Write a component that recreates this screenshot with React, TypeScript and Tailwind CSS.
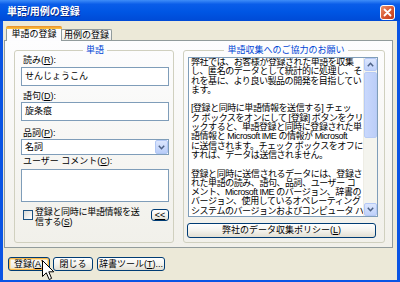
import React from 'react';

const xpButton =
  'flex items-center justify-center rounded-[3px] border border-[#003C74] bg-gradient-to-b from-white via-[#F4F3EE] to-[#E2DFD3] text-[9px] leading-none text-black';

const U = ({ children }: { children: React.ReactNode }) => (
  <span className="underline underline-offset-1">{children}</span>
);

const Chevron = ({ down = false }: { down?: boolean }) => (
  <svg width="7" height="5" viewBox="0 0 7 5" className={down ? 'rotate-180' : ''}>
    <path d="M0.8 4.2 L3.5 1.3 L6.2 4.2" fill="none" stroke="#4D6185" strokeWidth="1.5" />
  </svg>
);

const infoLines = [
  '弊社では、お客様が登録された単語を収集',
  'し、匿名のデータとして統計的に処理し、そ',
  'れを基に、より良い製品の開発を目指してい',
  'ます。',
  '',
  '[登録と同時に単語情報を送信する] チェッ',
  'ク ボックスをオンにして [登録] ボタンをクリ',
  'ックすると、単語登録と同時に登録された単',
  '語情報と Microsoft IME の情報が Microsoft',
  'に送信されます。チェック ボックスをオフに',
  'すれば、データは送信されません。',
  '',
  '登録と同時に送信されるデータには、登録さ',
  'れた単語の読み、語句、品詞、ユーザー コ',
  'メント、Microsoft IME のバージョン、辞書の',
  'バージョン、使用しているオペレーティング',
  'システムのバージョンおよびコンピュータ ハ',
];

const Label = ({ children, className = '' }: { children: React.ReactNode; className?: string }) => (
  <div className={`h-[10px] pl-[2px] text-[9px] leading-[10px] ${className}`}>{children}</div>
);

export default function App() {
  return (
    <div className="relative w-[400px] h-[282px] flex flex-col bg-[#0A54E4] font-['Liberation_Sans','Noto_Sans_CJK_JP',sans-serif] text-black overflow-hidden select-none">
      {/* title bar */}
      <div className="h-[21px] flex justify-between pl-[7px] pr-[5px] bg-[linear-gradient(to_bottom,#3F8DF8_0%,#0A5DE9_20%,#0056E4_55%,#004AD6_100%)]">
        <span className="self-center mt-[3px] text-white font-bold text-[10px] leading-none [text-shadow:1px_1px_0_#0B2A8A]">
          単語/用例の登録
        </span>
        <div className="self-end mb-[1px] w-[15px] h-[15px] rounded-[3px] border border-white bg-gradient-to-br from-[#E9906C] via-[#D95A33] to-[#C1391B] flex items-center justify-center">
          <svg width="9" height="9" viewBox="0 0 9 9">
            <path d="M1.5 1.5 L7.5 7.5 M7.5 1.5 L1.5 7.5" stroke="white" strokeWidth="1.8" strokeLinecap="round" />
          </svg>
        </div>
      </div>

      {/* dialog body */}
      <div className="flex-1 mx-[3px] mb-[2px] bg-[#ECE9D8] flex flex-col">
        {/* tabs */}
        <div className="flex items-end h-[14px] mt-[5px] pl-[3px]">
          <div className="relative z-10 -mb-px h-[15px] w-[56px] flex flex-col rounded-t-[2px] overflow-hidden">
            <div className="h-[3px] bg-gradient-to-b from-[#E68B2C] to-[#FFC83C]" />
            <div className="flex-1 bg-[#FCFCFE] border-x border-[#919B9C] flex items-center justify-center text-[9px] leading-none pb-[1px]">
              単語の登録
            </div>
          </div>
          <div className="h-[11px] w-[51px] -ml-px rounded-t-[2px] border border-b-0 border-[#919B9C] bg-gradient-to-b from-white to-[#ECEBE6] flex items-center justify-center text-[9px] leading-none">
            用例の登録
          </div>
        </div>

        {/* tab page */}
        <div className="ml-[1px] w-[389px] h-[208px] border border-[#919B9C] bg-gradient-to-b from-[#FDFDFE] to-[#F1F0EA] flex gap-[9px] pl-[9px] pt-[4px]">
          {/* 単語 group */}
          <fieldset className="w-[160px] h-[198px] min-w-0 border border-[#D0D0BF] rounded-[3px] pl-[6px] pr-[4px] flex flex-col">
            <legend className="mx-auto px-[3px] text-[#0046D5] text-[9px] leading-[10px]">単語</legend>
            <Label>
              読み(<U>R</U>):
            </Label>
            <div className="mt-[2px] h-[19px] border border-[#7F9DB9] bg-white pl-[3px] flex items-center text-[9px] leading-none">
              せんじょうこん
            </div>
            <Label className="mt-[5px]">
              語句(<U>D</U>):
            </Label>
            <div className="mt-[1px] h-[19px] border border-[#7F9DB9] bg-white pl-[3px] flex items-center text-[9px] leading-none">
              旋条痕
            </div>
            <Label className="mt-[7px]">
              品詞(<U>P</U>):
            </Label>
            <div className="mt-[1px] h-[16px] border border-[#7F9DB9] bg-white pl-[3px] flex items-center text-[9px] leading-none">
              <span className="flex-1">名詞</span>
              <div className="w-[13px] h-[14px] rounded-[2px] border border-[#B1C7F4] bg-gradient-to-b from-[#DCE6FD] to-[#B9CDF8] flex items-center justify-center">
                <Chevron down />
              </div>
            </div>
            <Label className="mt-[1px]">
              ユーザー コメント(<U>C</U>):
            </Label>
            <div className="mt-[3px] h-[33px] border border-[#7F9DB9] bg-white" />
            <div className="mt-[6px] flex items-start">
              <div className="ml-[2px] mt-[2px] w-[10px] h-[10px] border border-[#1C5180] bg-gradient-to-br from-[#DCDCD7] to-white" />
              <div className="ml-[2px] text-[9px] leading-[9.5px] whitespace-nowrap tracking-[-0.3px]">
                登録と同時に単語情報を送
                <br />
                信する(<U>S</U>)
              </div>
              <div className={`${xpButton} ml-auto w-[18px] h-[12px] mt-[1px]`}>
                <U>&lt;&lt;</U>
              </div>
            </div>
          </fieldset>

          {/* お願い group */}
          <fieldset className="w-[202px] h-[198px] min-w-0 border border-[#D0D0BF] rounded-[3px] pl-[4px] flex flex-col">
            <legend className="mx-auto px-[3px] text-[#0046D5] text-[9px] leading-[10px]">単語収集へのご協力のお願い</legend>
            <div className="mt-[2px] w-[190px] h-[160px] border border-[#7F9DB9] bg-white flex">
              <div className="flex-1 min-w-0 pl-[2px] overflow-hidden text-[9px] leading-[9.3px] whitespace-nowrap tracking-[-0.45px]">
                {infoLines.map((line, i) => (
                  <div key={i} className="h-[9.3px]">
                    {line}
                  </div>
                ))}
              </div>
              <div className="w-[14px] flex flex-col bg-[#F4F4EE] border-l border-[#EEEDE5]">
                <div className="h-[13px] rounded-[2px] border border-[#B4C8F6] bg-gradient-to-b from-[#DCE6FD] to-[#BFD1FA] flex items-center justify-center">
                  <Chevron />
                </div>
                <div className="mt-[1px] h-[66px] rounded-[2px] border border-[#B7CBF5] bg-gradient-to-r from-[#C9D8FC] to-[#BCCEF8]" />
                <div className="flex-1" />
                <div className="h-[13px] rounded-[2px] border border-[#B4C8F6] bg-gradient-to-b from-[#DCE6FD] to-[#BFD1FA] flex items-center justify-center">
                  <Chevron down />
                </div>
              </div>
            </div>
            <div className={`${xpButton} mt-[6px] -ml-px w-[189px] h-[15px]`}>
              弊社のデータ収集ポリシー(<U>L</U>)
            </div>
          </fieldset>
        </div>

        {/* bottom buttons */}
        <div className="mt-[9px] pl-[5px] flex">
          <div className={`${xpButton} w-[42px] h-[14px] shadow-[inset_0_0_0_1px_#F8B84A,inset_0_0_0_2px_#FDE3A8]`}>
            登録(<U>A</U>)
          </div>
          <div className={`${xpButton} ml-[3px] w-[40px] h-[14px]`}>閉じる</div>
          <div className={`${xpButton} ml-[4px] w-[68px] h-[14px]`}>
            辞書ツール(<U>T</U>)...
          </div>
        </div>
      </div>

      {/* mouse pointer */}
      <svg className="absolute left-[42px] top-[260px]" width="13" height="21" viewBox="0 0 13 21">
        <path d="M0.5 0.5 L0.5 16.5 L4.3 12.8 L7.2 19.5 L9.6 18.4 L6.8 11.8 L11.8 11.8 Z" fill="white" stroke="black" strokeWidth="1" strokeLinejoin="miter" />
      </svg>
    </div>
  );
}
